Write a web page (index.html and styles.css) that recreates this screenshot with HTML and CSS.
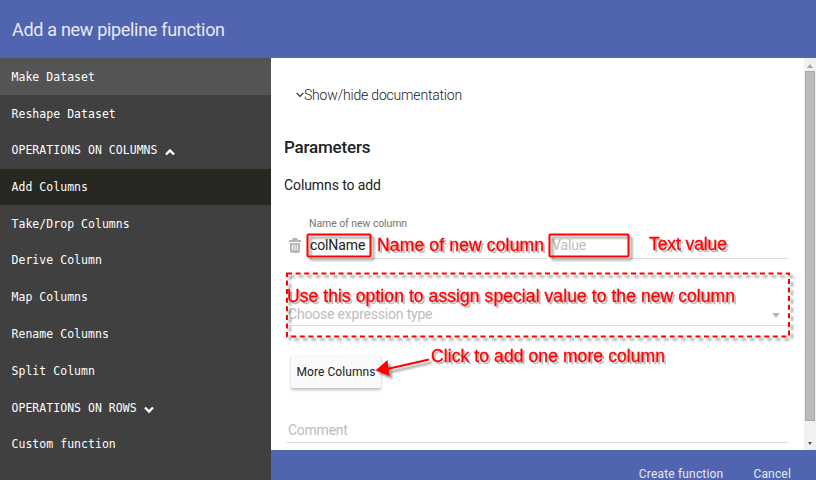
FILE: index.html
```html
<!DOCTYPE html>
<html lang="en">
<head>
<meta charset="utf-8">
<title>Add a new pipeline function</title>
<link rel="stylesheet" href="styles.css">
</head>
<body>
<div class="dialog">
  <header class="header"><h1>Add a new pipeline function</h1></header>
  <div class="body">
    <nav class="sidebar">
      <a class="item hover">Make Dataset</a>
      <a class="item">Reshape Dataset</a>
      <a class="item">OPERATIONS ON COLUMNS<svg class="caret" width="10" height="8" viewBox="0 0 10 8"><path d="M1 6.5 5 2.5 9 6.5"/></svg></a>
      <a class="item active">Add Columns</a>
      <a class="item">Take/Drop Columns</a>
      <a class="item">Derive Column</a>
      <a class="item">Map Columns</a>
      <a class="item">Rename Columns</a>
      <a class="item">Split Column</a>
      <a class="item">OPERATIONS ON ROWS<svg class="caret" width="10" height="8" viewBox="0 0 10 8"><path d="M1 2.5 5 6.5 9 2.5"/></svg></a>
      <a class="item">Custom function</a>
    </nav>
    <div class="right">
      <div class="viewport">
        <main class="form">
          <div class="docs"><svg width="8" height="6" viewBox="0 0 8 6"><path d="M.7 1 4 4.3 7.3 1"/></svg><span>Show/hide documentation</span></div>
          <h2>Parameters</h2>
          <h3>Columns to add</h3>
          <div class="row">
            <svg class="trash" width="12" height="15" viewBox="0 0 12 15"><path fill="#b5b5b5" d="M4 0h4l1 2h3v2H0V2h3zM1 5h10v8q0 2-2 2H3q-2 0-2-2z"/><path d="M3.7 6.5v6M6 6.5v6M8.3 6.5v6" stroke="#fff"/></svg>
            <label class="name"><span class="caption">Name of new column</span><span class="input">colName</span></label>
            <label class="value"><span class="input">Value</span></label>
          </div>
          <div class="select"><span>Choose expression type</span><i></i></div>
          <button class="more"><span>More Columns</span></button>
          <div class="comment"><span>Comment</span></div>
        </main>
        <div class="scrollbar"><i class="up"></i><div class="thumb"></div><i class="down"></i></div>
      </div>
      <footer class="footer"><span class="create">Create function</span><span class="cancel">Cancel</span></footer>
    </div>
  </div>
  <svg class="notes" width="816" height="480" viewBox="0 0 816 480">
    <g class="boxes">
      <rect x="307.500" y="234.500" width="63" height="22" rx="1"/>
      <rect x="549.500" y="234.500" width="79" height="22" rx="1"/>
      <path class="dashed" d="M287 273.500H789V336.500H287Z"/>
      <path d="M429 359.500 385 369.500"/>
      <path class="head" d="M375.500 370.500 387.500 360 389.500 376Z"/>
    </g>
    <g class="labels">
      <text x="377" y="251" textLength="167">Name of new column</text>
      <text x="649" y="250" textLength="78">Text value</text>
      <text x="287" y="302" textLength="448">Use this option to assign special value to the new column</text>
      <text x="431" y="362" textLength="234">Click to add one more column</text>
    </g>
  </svg>
</div>
</body>
</html>
```
FILE: styles.css
```css
* { box-sizing: border-box; }
body { margin: 0; font-family: Roboto, sans-serif; color: #212121; }
.dialog { position: relative; width: 816px; height: 480px; overflow: hidden; display: flex; flex-direction: column; }
.header { flex: 0 0 58px; display: flex; align-items: center; padding-left: 12px; background: #5164af; }
h1 { margin: 0; font-size: 18px; font-weight: 400; letter-spacing: -.31px; color: #e6e9f5; }
.body { flex: 1; display: flex; min-height: 0; }
.sidebar { width: 271px; background: #404040; overflow: hidden; }
.item { display: flex; align-items: center; height: 36.8px; padding-left: 11.500px; color: #fff; font: 11.500px "DejaVu Sans Mono", monospace; letter-spacing: .03px; }
.hover { height: 37.200px; background: #545454; }
.active { height: 36.400px; background: #272822; }
.caret { margin: 3px 0 0 7px; fill: none; stroke: #fff; stroke-width: 2.400; }
.right { flex: 1; display: flex; flex-direction: column; }
.viewport { flex: 0 0 392px; display: flex; background: #fff; overflow: hidden; }
.form { width: 533px; padding: 28px 16px 0 13px; }
.docs { display: flex; align-items: center; height: 18px; padding-left: 12px; font-size: 14px; font-weight: 300; letter-spacing: -.19px; }
.docs svg { fill: none; stroke: #333; stroke-width: 1.200; }
h2 { margin: 33px 0 0; height: 20px; line-height: 20px; font-size: 17px; font-weight: 500; letter-spacing: -.2px; }
h3 { margin: 19px 0 0; height: 18px; line-height: 18px; font-size: 14px; font-weight: 400; letter-spacing: -.1px; }
.row { display: flex; margin-top: 23px; height: 42px; }
.trash { margin: 21px 6px 0 5px; }
.name { width: 240px; border-bottom: 1px solid #dedede; margin-right: 4px; padding-left: 2px; display: flex; flex-direction: column; }
.value { flex: 1; border-bottom: 1px solid #dedede; padding: 18px 0 0 1px; }
.caption { height: 13px; line-height: 13px; font-size: 10.500px; color: #777; letter-spacing: -.08px; }
.input { display: block; height: 20px; line-height: 20px; font-size: 14px; letter-spacing: -.12px; }
.name .input { margin-top: 5px; padding-left: 1px; }
.value .input { color: #bdbdbd; }
.select { display: flex; justify-content: space-between; align-items: center; height: 24px; margin: 43px 0 0 2px; padding: 0 8px 0 2px; border-bottom: 1px solid #dedede; color: #bdbdbd; font-size: 14px; letter-spacing: -.2px; }
.select i { border: 4px solid transparent; border-top: 5px solid #b8b8b8; border-bottom: 0; margin-top: 3px; }
.more { display: block; margin: 29px 0 0 7px; width: 90px; height: 33px; padding: 0; border: 0; border-radius: 2px; background: #fafafa; box-shadow: 0 2px 3px #0004; color: #212121; font: 12px Roboto, sans-serif; letter-spacing: .07px; }
.comment { margin: 31px 0 0 2px; height: 24px; line-height: 22px; padding-left: 2px; border-bottom: 1px solid #dedede; color: #bdbdbd; font-size: 14px; letter-spacing: -.25px; }
.scrollbar { width: 12px; display: flex; flex-direction: column; align-items: center; background: #f1f1f1; }
.thumb { width: 10px; height: 350px; margin-top: 3px; background: #bcbcbc; border: 1px solid #a8a8a8; }
.up { margin-top: 6px; border: 3px solid transparent; border-bottom: 4px solid #a3a3a3; border-top: 0; }
.down { margin-top: 21px; border: 2.500px solid transparent; border-top: 3px solid #505050; border-bottom: 0; }
.footer { flex: 1; min-height: 0; background: #5164af; color: #e6e9f5; display: flex; justify-content: flex-end; gap: 30px; padding: 16px 25px 0 0; font-size: 12px; line-height: 16px; letter-spacing: .18px; white-space: nowrap; }
.notes { position: absolute; inset: 0; pointer-events: none; }
.boxes { fill: none; stroke: #f00; stroke-width: 2; filter: drop-shadow(3px 3px 1px #0006); }
.boxes .dashed { stroke-dasharray: 5 3.600; }
.boxes .head { fill: #f00; stroke: none; }
.labels { fill: #f00; stroke: #f00; stroke-width: .3; font: 17.500px "Liberation Sans", sans-serif; filter: drop-shadow(2px 2px 0 #0004); }
```
